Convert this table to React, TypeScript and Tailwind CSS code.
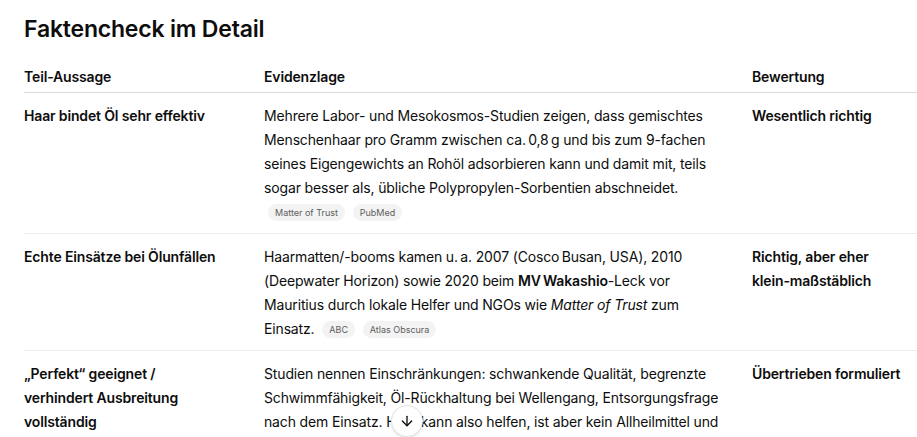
import React from 'react';
import { ArrowDown } from 'lucide-react';

type Row = {
  claim: React.ReactNode;
  evidence: React.ReactNode;
  sources: string[];
  verdict: React.ReactNode;
};

const Pill: React.FC<{ label: string }> = ({ label }) => (
  <span className="inline-flex items-center h-[17px] px-[7px] ml-1 rounded-full bg-[#f3f3f3] text-[9px] leading-none tracking-normal text-[#5d5d5d] align-middle relative -top-[1px]">
    {label}
  </span>
);

const rows: Row[] = [
  {
    claim: 'Haar bindet Öl sehr effektiv',
    evidence: (
      <>
        Mehrere Labor- und Mesokosmos-Studien zeigen, dass gemischtes Menschenhaar pro Gramm zwischen ca.&#8239;0,8&#8239;g und bis zum 9-fachen seines Eigengewichts an Rohöl adsorbieren kann und damit mit, teils sogar besser als, übliche Polypropylen-Sorbentien abschneidet.
      </>
    ),
    sources: ['Matter of Trust', 'PubMed'],
    verdict: 'Wesentlich richtig',
  },
  {
    claim: 'Echte Einsätze bei Ölunfällen',
    evidence: (
      <>
        Haarmatten/-booms kamen u.&#8239;a. 2007 (Cosco&#8239;Busan, USA), 2010 (Deepwater Horizon) sowie 2020 beim{' '}
        <strong className="font-semibold">MV&#8239;Wakashio</strong>-Leck vor Mauritius durch lokale Helfer und NGOs wie{' '}
        <em>Matter of Trust</em> zum Einsatz.
      </>
    ),
    sources: ['ABC', 'Atlas Obscura'],
    verdict: 'Richtig, aber eher klein-maßstäblich',
  },
  {
    claim: '„Perfekt“ geeignet / verhindert Ausbreitung vollständig',
    evidence: (
      <>
        Studien nennen Einschränkungen: schwankende Qualität, begrenzte Schwimmfähigkeit, Öl-Rückhaltung bei Wellengang, Entsorgungsfrage nach dem Einsatz. Haar kann also helfen, ist aber kein Allheilmittel und ersetzt keine professionelle Ölbekämpfung.
      </>
    ),
    sources: [],
    verdict: 'Übertrieben formuliert',
  },
];

const App: React.FC = () => {
  return (
    <div className="relative h-[437px] overflow-hidden bg-white text-[#0d0d0d] font-['Inter',sans-serif]">
      <div className="pl-6 pt-[15px]">
        <h2 className="text-[23px] leading-[28px] font-semibold tracking-[-0.2px]">Faktencheck im Detail</h2>

        {/* Table */}
        <div className="mt-[22px] text-[14px] leading-[24px] tracking-[-0.15px]">
          <div className="grid grid-cols-[240px_488px_1fr] border-b border-[#d9d9d9] pb-[3px] font-semibold">
            <div className="pr-[40px]">Teil-Aussage</div>
            <div className="pr-[32px]">Evidenzlage</div>
            <div className="pr-2">Bewertung</div>
          </div>

          {rows.map((row, i) => (
            <div key={i} className="grid grid-cols-[240px_488px_1fr] border-b border-[#ececec] pt-[11px] pb-[9px]">
              <div className="pr-[40px] font-semibold">{row.claim}</div>
              <div className="pr-[32px]">
                {row.evidence}
                {row.sources.map((s) => (
                  <React.Fragment key={s}>
                    {' '}
                    <Pill label={s} />
                  </React.Fragment>
                ))}
              </div>
              <div className="pr-2 font-semibold">{row.verdict}</div>
            </div>
          ))}
        </div>
      </div>

      {/* Scroll to bottom */}
      <button className="absolute left-[391px] top-[405px] w-8 h-8 rounded-full bg-white border border-[#e5e5e5] shadow-sm flex items-center justify-center text-[#0d0d0d]">
        <ArrowDown size={16} strokeWidth={2} />
      </button>
    </div>
  );
};

export default App;
